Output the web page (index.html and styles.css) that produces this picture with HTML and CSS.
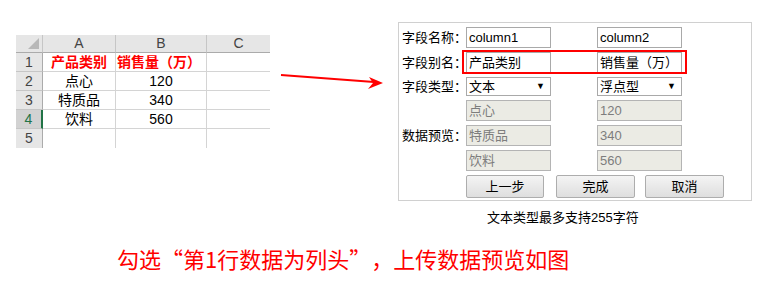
FILE: index.html
```html
<!DOCTYPE html>
<html>
<head>
<meta charset="utf-8">
<title>数据预览</title>
<link rel="stylesheet" href="styles.css">
</head>
<body>
<div class="top">
    <!-- 左边：Excel 原始数据 -->
    <div class="sheet">
        <div class="hd corner"></div><div class="hd">A</div><div class="hd">B</div><div class="hd last">C</div>
        <div class="rn">1</div><div class="red">产品类别</div><div class="red left">销售量（万）</div><div class="last"></div>
        <div class="rn">2</div><div>点心</div><div>120</div><div class="last"></div>
        <div class="rn">3</div><div>特质品</div><div>340</div><div class="last"></div>
        <div class="rn cur">4</div><div>饮料</div><div>560</div><div class="last"></div>
        <div class="rn end">5</div><div class="end"></div><div class="end"></div><div class="last end"></div>
    </div>

    <svg class="arrow" width="128" height="100" viewBox="0 0 128 100">
        <line x1="11" y1="75" x2="104" y2="82" stroke="#f00" stroke-width="2"/>
        <polygon points="113,83 99,77 103,83 98,89" fill="#f00"/>
    </svg>

    <!-- 右边：上传预览对话框 -->
    <div class="right">
        <div class="dialog">
            <div class="row">
                <span class="lbl">字段名称：</span>
                <div class="pair">
                    <div class="fld">column1</div>
                    <div class="fld">column2</div>
                </div>
            </div>
            <div class="row">
                <span class="lbl">字段别名：</span>
                <div class="pair mark">
                    <div class="fld">产品类别</div>
                    <div class="fld">销售量（万）</div>
                </div>
            </div>
            <div class="row sel-row">
                <span class="lbl">字段类型：</span>
                <div class="pair">
                    <div class="fld sel"><span>文本</span><i>▼</i></div>
                    <div class="fld sel"><span>浮点型</span><i>▼</i></div>
                </div>
            </div>
            <div class="row">
                <span class="lbl"></span>
                <div class="pair">
                    <div class="fld off">点心</div>
                    <div class="fld off">120</div>
                </div>
            </div>
            <div class="row">
                <span class="lbl">数据预览：</span>
                <div class="pair">
                    <div class="fld off">特质品</div>
                    <div class="fld off">340</div>
                </div>
            </div>
            <div class="row">
                <span class="lbl"></span>
                <div class="pair">
                    <div class="fld off">饮料</div>
                    <div class="fld off">560</div>
                </div>
            </div>
            <div class="row btns">
                <span class="lbl"></span>
                <a href="#" class="btn">上一步</a>
                <a href="#" class="btn b2">完成</a>
                <a href="#" class="btn b3">取消</a>
            </div>
        </div>
        <p class="note">文本类型最多支持255字符</p>
    </div>
</div>
<p class="headline">勾选“第1行数据为列头”，上传数据预览如图</p>
</body>
</html>
```

FILE: styles.css
```css
* { margin: 0; padding: 0; box-sizing: border-box; }
body { font-family: "Liberation Sans", "Noto Sans CJK SC", sans-serif; font-size: 13px; color: #000; background: #fff; }
a { color: #000; text-decoration: none; }

.top { display: flex; align-items: flex-start; }

/* excel */
.sheet { display: grid; grid-template-columns: 27px 73px 91px 63px; grid-template-rows: 18px; grid-auto-rows: 19px; margin: 35px 0 0 16px; font-size: 14px; }
.sheet div { border-right: 1px solid #d4d4d4; border-bottom: 1px solid #d4d4d4; text-align: center; line-height: 18px; white-space: nowrap; }
.sheet .hd { background: #e6e6e6; color: #444; border-bottom-color: #ababab; border-right-color: #c6c6c6; line-height: 17px; }
.sheet .rn { background: #e6e6e6; color: #444; border-right-color: #ababab; border-bottom-color: #c6c6c6; }
.sheet .rn.cur { background: #d2d2d2; color: #217346; border-right: 2px solid #217346; }
.sheet .corner { position: relative; }
.sheet .corner::after { content: ""; position: absolute; right: 3px; bottom: 3px; border-left: 11px solid transparent; border-bottom: 11px solid #b8b8b8; }
.sheet .red { color: #f00; font-weight: bold; }
.sheet .left { text-align: left; padding-left: 1px; }
.sheet .last { border-right: none; }
.sheet .end { border-bottom: none; }

.arrow { flex: none; }

/* dialog */
.right { margin-top: 22px; }
.dialog { width: 354px; height: 179px; border: 1px solid #d0d0d0; padding: 4px 0 0 3px; }
.row { display: flex; align-items: center; height: 21px; margin-bottom: 4px; }
.row.sel-row { height: 19px; }
.lbl { width: 64px; flex: none; font-size: 13px; line-height: 21px; white-space: nowrap; }
.pair { display: flex; gap: 46px; height: 100%; }
.pair.mark { position: relative; }
.pair.mark::after { content: ""; position: absolute; left: -4px; right: -5px; top: -2px; bottom: -1px; border: 2px solid #f00; }
.fld { width: 85px; height: 100%; border: 1px solid #a9a9a9; padding-left: 2px; font-size: 13px; line-height: 19px; white-space: nowrap; background: #fff; }
.fld.sel { display: flex; justify-content: space-between; line-height: 17px; padding-right: 5px; }
.fld.sel i { font-style: normal; font-size: 9px; }
.fld.off { background: #ebebe4; color: #7d7d7d; border-color: #b4b4b4; }

.btns { height: 23px; }
.btn { display: block; width: 78px; height: 23px; border: 1px solid #adadad; border-radius: 2px; background: linear-gradient(#f4f4f4, #dedede); text-align: center; line-height: 21px; font-size: 13px; }
.btn.b2 { width: 79px; margin-left: 12px; }
.btn.b3 { width: 79px; margin-left: 10px; }

.note { margin-top: 7px; padding-left: 89px; font-size: 13px; line-height: 20px; }

.headline { margin-top: 15px; padding-left: 117px; color: #f00; font-family: "Noto Sans CJK SC", "Liberation Sans", sans-serif; font-size: 22px; line-height: 30px; white-space: nowrap; text-spacing-trim: space-all; }
```
